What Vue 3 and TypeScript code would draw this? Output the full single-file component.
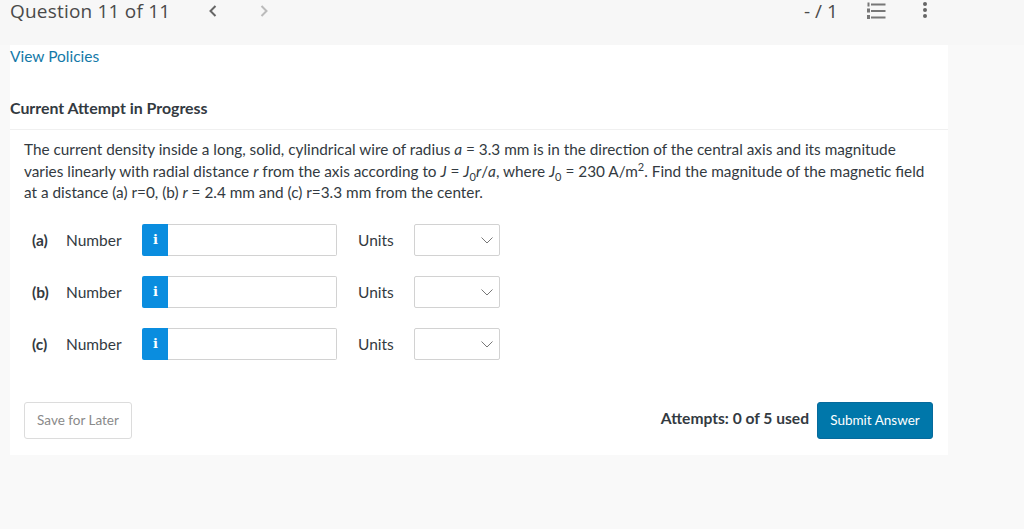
<template>
  <div class="page">
    <header class="top-bar">
      <h1 class="title">Question 11 of 11</h1>
      <div class="pager">
        <svg class="chev" width="10" height="14" viewBox="0 0 10 14"><path d="M7.5 2 L2.5 7 L7.5 12" fill="none" stroke="#666" stroke-width="2" /></svg>
        <svg class="chev" width="10" height="14" viewBox="0 0 10 14"><path d="M2.5 2 L7.5 7 L2.5 12" fill="none" stroke="#bbb" stroke-width="2" /></svg>
      </div>
      <div class="score">- / 1</div>
      <svg class="list-icon" width="20" height="18" viewBox="0 0 20 18">
        <g fill="#777">
          <rect x="1.5" y="0.5" width="2" height="4" />
          <rect x="1" y="6.5" width="3" height="4" />
          <rect x="1" y="13" width="3" height="4" />
          <rect x="5" y="1.5" width="14.5" height="2" />
          <rect x="5" y="8" width="14.5" height="2" />
          <rect x="5" y="14.5" width="14.5" height="2" />
        </g>
      </svg>
      <svg class="more-icon" width="6" height="18" viewBox="0 0 6 18">
        <g fill="#666">
          <circle cx="3" cy="2" r="2" />
          <circle cx="3" cy="8" r="2" />
          <circle cx="3" cy="14" r="2" />
        </g>
      </svg>
    </header>

    <main class="card">
      <a class="policies">View Policies</a>
      <h2 class="status">Current Attempt in Progress</h2>

      <section class="body">
        <p class="question">
          The current density inside a long, solid, cylindrical wire of radius <i>a</i> = 3.3 mm is in the direction of the central axis and its magnitude<br />
          varies linearly with radial distance <i>r</i> from the axis according to <i>J</i> = <i>J</i><sub>0</sub><i>r</i>/<i>a</i>, where <i>J</i><sub>0</sub> = 230 A/m<sup>2</sup>. Find the magnitude of the magnetic field<br />
          at a distance (a) r=0, (b) <i>r</i> = 2.4 mm and (c) r=3.3 mm from the center.
        </p>

        <div class="answers">
          <div v-for="part in parts" :key="part" class="answer-row">
            <span class="part">({{ part }})</span>
            <span class="label">Number</span>
            <div class="info">i</div>
            <input class="number" type="text" />
            <span class="units">Units</span>
            <div class="select">
              <svg width="12" height="7" viewBox="0 0 12 7"><path d="M0.5 0.5 L6 6 L11.5 0.5" fill="none" stroke="#777" stroke-width="1" /></svg>
            </div>
          </div>
        </div>

        <div class="footer">
          <button class="save">Save for Later</button>
          <div class="submit-wrap">
            <span class="attempts">Attempts: 0 of 5 used</span>
            <button class="submit">Submit Answer</button>
          </div>
        </div>
      </section>
    </main>
  </div>
</template>

<script setup lang="ts">
const parts: string[] = ['a', 'b', 'c'];
</script>

<style>
html, body {
  background: #f9f9f9;
}
</style>

<style scoped>
.page {
  height: 529px;
  overflow: hidden;
  font-family: Lato, "Liberation Sans", sans-serif;
  color: #333a41;
  font-size: 15.5px;
}
.top-bar {
  height: 45px;
  display: flex;
  align-items: flex-start;
  padding-left: 10px;
  box-sizing: border-box;
  background: #f7f7f7;
}
.title {
  margin: 0;
  width: 198px;
  font-family: "Open Sans", sans-serif;
  font-weight: 400;
  font-size: 19px;
  line-height: 22px;
  color: #4a4a4a;
  letter-spacing: 0.2px;
}
.pager {
  display: flex;
  gap: 41px;
  padding-top: 4px;
}
.score {
  margin-left: 535px;
  width: 62px;
  font-family: "Open Sans", sans-serif;
  font-size: 19px;
  line-height: 22px;
  color: #4a4a4a;
}
.list-icon {
  margin-top: 2px;
}
.more-icon {
  margin: 2px 0 0 36px;
}
.card {
  width: 938px;
  height: 410px;
  margin-left: 10px;
  background: #fff;
}
.policies {
  display: block;
  padding-top: 2px;
  line-height: 18px;
  color: #1479a8;
}
.status {
  margin: 0;
  padding: 34px 0 12px;
  font-size: 15.9px;
  line-height: 18px;
  font-weight: 700;
  color: #333a41;
  border-bottom: 1px solid #f0f0f0;
}
.body {
  padding: 0 15px 0 14px;
}
.question {
  margin: 0;
  padding-top: 9px;
  font-size: 15.34px;
  line-height: 21.5px;
  white-space: nowrap;
}
.question sub {
  font-size: 11px;
  line-height: 0;
}
.question sup {
  font-size: 11px;
  line-height: 0;
}
.answers {
  padding-top: 20px;
  display: flex;
  flex-direction: column;
  gap: 20px;
}
.answer-row {
  display: flex;
  align-items: center;
  height: 32px;
}
.part {
  width: 42px;
  padding-left: 8px;
  box-sizing: border-box;
  font-weight: 700;
}
.label {
  width: 76px;
}
.info {
  width: 26px;
  height: 32px;
  padding-left: 1px;
  box-sizing: border-box;
  background: #0a8ddf;
  color: #fff;
  border-radius: 2px 0 0 2px;
  font-family: "DejaVu Serif", serif;
  font-weight: 700;
  font-size: 13px;
  line-height: 32px;
  text-align: center;
}
.number {
  width: 169px;
  height: 32px;
  box-sizing: border-box;
  border: 1px solid #d2d2d2;
  border-left: none;
  border-radius: 0 2px 2px 0;
  background: #fff;
  outline: none;
}
.units {
  margin-left: 21px;
  width: 56px;
}
.select {
  width: 86px;
  height: 32px;
  box-sizing: border-box;
  border: 1px solid #d2d2d2;
  border-radius: 2px;
  display: flex;
  align-items: center;
  justify-content: flex-end;
  padding: 1px 6px 0 0;
}
.footer {
  display: flex;
  justify-content: space-between;
  align-items: center;
  padding-top: 42px;
}
.save {
  width: 108px;
  height: 37px;
  border: 1px solid #dcdcdc;
  border-radius: 3px;
  background: #fff;
  font-family: inherit;
  font-size: 13.5px;
  color: #8a8a8a;
  padding: 0;
}
.submit-wrap {
  display: flex;
  align-items: center;
  gap: 8px;
}
.attempts {
  font-weight: 700;
  font-size: 15.6px;
  padding-bottom: 4px;
}
.submit {
  width: 116px;
  height: 37px;
  border: 1px solid #066a9c;
  border-radius: 3px;
  background: #0077aa;
  color: #fff;
  font-family: inherit;
  font-size: 13.5px;
  padding: 0;
}
</style>
